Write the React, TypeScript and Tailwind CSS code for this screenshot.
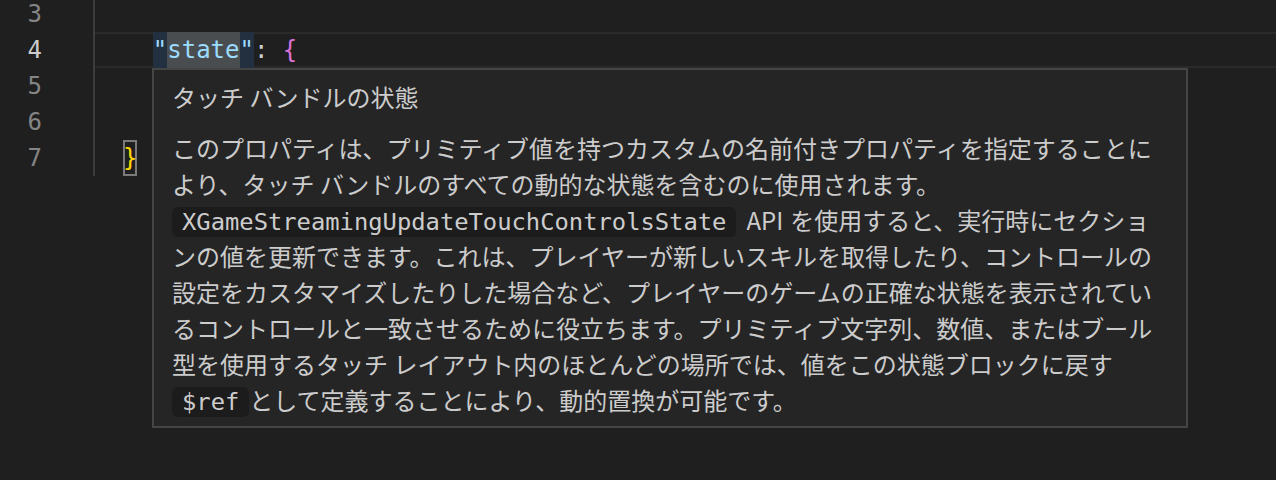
const mono = "font-['DejaVu_Sans_Mono',monospace]";

function Code({ children }: { children: React.ReactNode }) {
  return (
    <code className={`${mono} rounded-[6px] bg-[#1c1c1c] px-[10px] py-[1px] text-[23.8px] leading-[20px]`}>
      {children}
    </code>
  );
}

function HoverCard() {
  return (
    <div className="absolute left-[152px] top-[68px] w-[1036px] border-2 border-[#454545] bg-[#252526] pl-[18px] pr-[26px] pt-[9px] pb-[8px] font-['Noto_Sans_CJK_JP',sans-serif] text-[24px] leading-[36px] text-[#cccccc]">
      <p>タッチ バンドルの状態</p>
      <p className="mt-[15px]">
        このプロパティは、プリミティブ値を持つカスタムの名前付きプロパティを指定することにより、タッチ バンドルのすべての動的な状態を含むのに使用されます。{" "}
        <Code>XGameStreamingUpdateTouchControlsState</Code>
        <span className="ml-[10px] mr-[7px]">API</span>
        を使用すると、実行時にセクショ
        <br />
        ンの値を更新できます。これは、プレイヤーが新しいスキルを取得したり、コントロールの設定をカスタマイズしたりした場合など、プレイヤーのゲームの正確な状態を表示されているコントロールと一致させるために役立ちます。プリミティブ文字列、数値、またはブール型を使用するタッチ
        レイアウト内のほとんどの場所では、値をこの状態ブロックに戻す{" "}
        <Code>$ref</Code>として定義することにより、動的置換が可能です。
      </p>
    </div>
  );
}

export default function App() {
  const lines = [3, 4, 5, 6, 7];
  return (
    <div className="relative h-[480px] w-full overflow-hidden bg-[#1f1f1f]">
      <div className={`-mt-[4px] flex ${mono} text-[24px] leading-[36px]`}>
        <div className="w-[93px] shrink-0 pr-[51px] text-right">
          {lines.map((n) => (
            <div key={n} className={n === 4 ? "h-[36px] text-[#cccccc]" : "h-[36px] text-[#858585]"}>
              {n}
            </div>
          ))}
        </div>
        <div className="flex-1">
          <div className="border-l-2 border-[#3c3c3c] whitespace-pre">
            <div className="h-[36px]" />
            <div className="h-[36px] border-y-2 border-[#2a2a2a]">
              <span className="-mt-[2px] inline-block h-[36px] align-top">
                {"    "}
                <span className="inline-block h-[36px] bg-[#233040] text-[#9cdcfe]">
                  "<span className="inline-block bg-[#4a4d50]">state</span>"
                </span>
                <span className="text-[#cccccc]">: </span>
                <span className="text-[#da70d6]">{"{"}</span>
              </span>
            </div>
            <div className="h-[36px]" />
            <div className="h-[36px]" />
            <div className="h-[36px]">
              {"  "}
              <span className="-ml-[1px] inline-block h-[36px] text-[#ffd700] shadow-[inset_0_0_0_2px_#7a7a7a]">{"}"}</span>
            </div>
          </div>
        </div>
      </div>
      <HoverCard />
    </div>
  );
}
